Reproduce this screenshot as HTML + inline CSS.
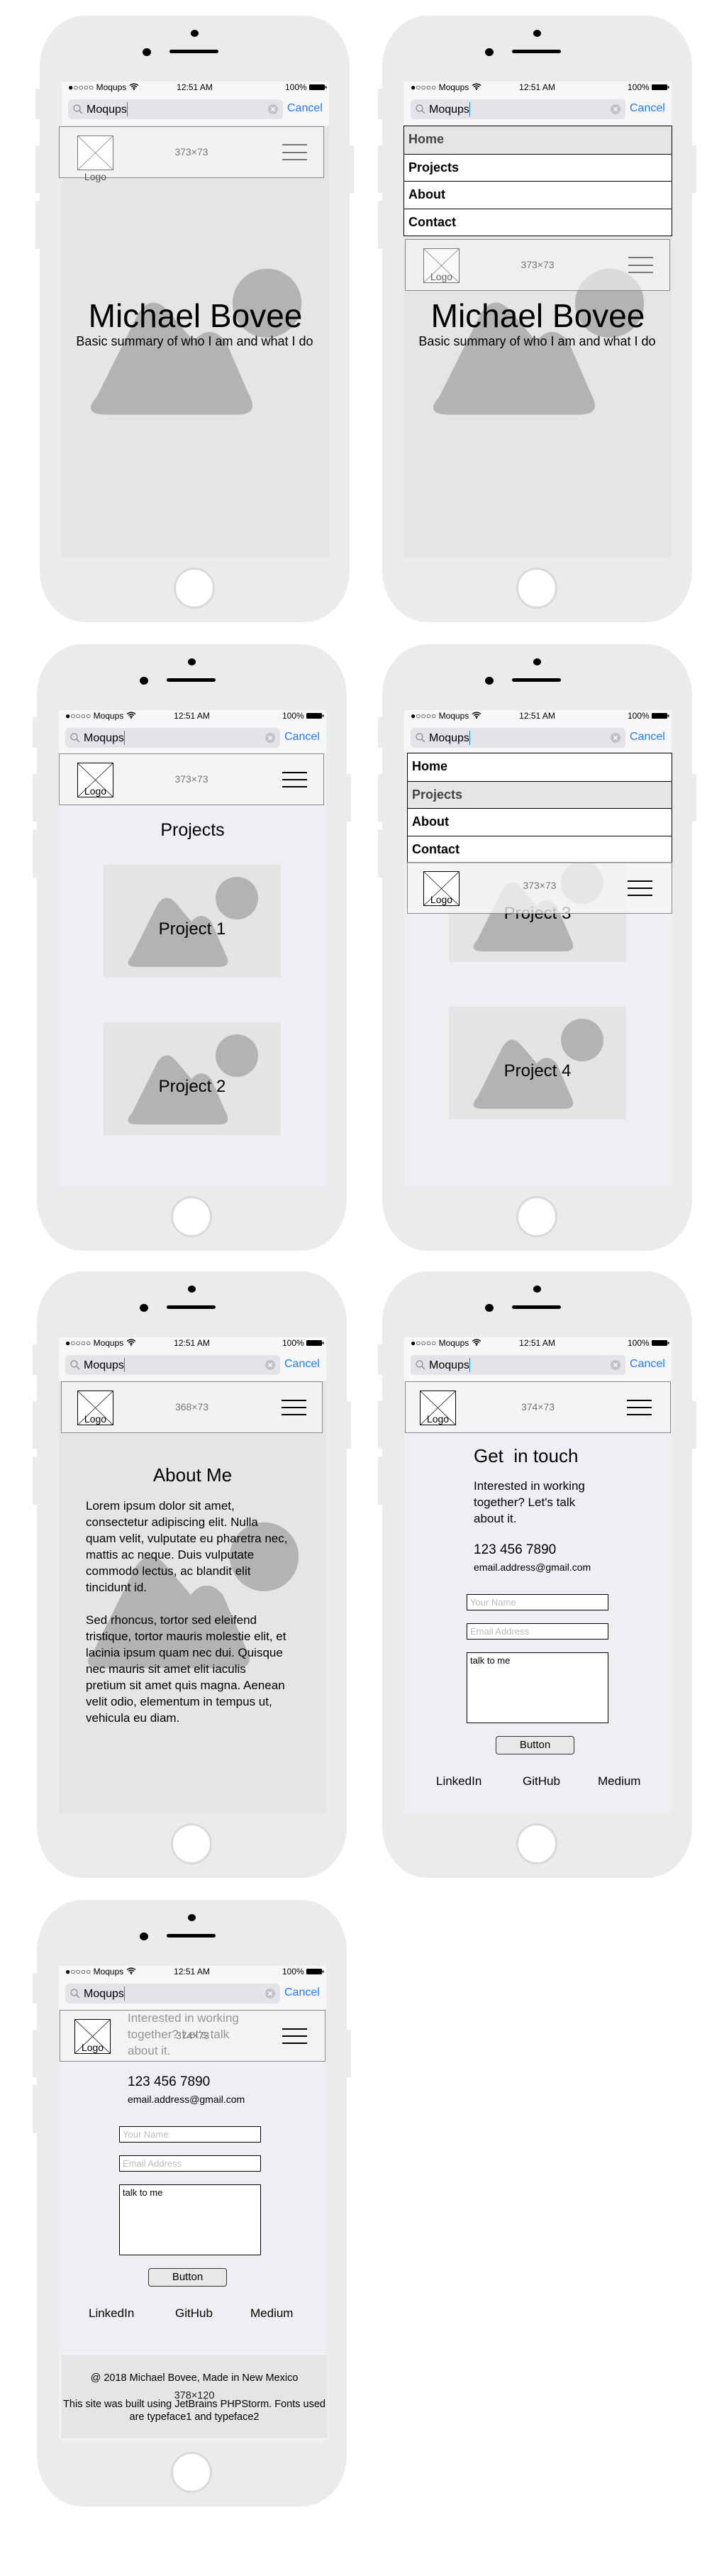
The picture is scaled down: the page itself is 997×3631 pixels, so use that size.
<!DOCTYPE html>
<html><head><meta charset="utf-8">
<style>
*{margin:0;padding:0;box-sizing:border-box}
body{width:997px;height:3631px;background:#fff;position:relative;overflow:hidden;font-family:"Liberation Sans",Arial,sans-serif;color:#000}
.ph{position:absolute;width:437px;height:855px;background:#ebebeb;border-radius:64px/72px}
.ph>*{position:absolute}
.sbtn{background:#ebebeb;width:7px}
.cam{left:213px;top:20px;width:11px;height:10px;border-radius:50%;background:#000}
.dot{left:145px;top:46px;width:12px;height:11px;border-radius:50%;background:#000}
.spk{left:183px;top:48px;width:69px;height:5px;border-radius:3px;background:#000}
.home{left:189px;top:778px;width:58px;height:58px;border-radius:50%;background:#fff;border:3px solid #d9d9d9}
.scr{left:31px;top:93px;width:377px;height:671px}
.stat{left:31px;top:93px;width:377px;height:62px;background:#f7f7f7}
.st{font-size:12px;line-height:14px;top:94px;white-space:nowrap}
.sf{left:40px;top:118px;width:303px;height:28px;border-radius:6px;background:#e3e3e8}
.stxt{left:66px;top:124px;font-size:16px;line-height:18px}
.cur{left:123px;top:122px;width:1px;height:20px;background:#1f7cf5}
.cancel{left:349px;top:122px;font-size:16px;line-height:18px;color:#1f7cf5}
.nav{height:73px;border:1px solid #888;background:rgba(245,245,246,0.82)}
.nav>*{position:absolute}
.logo{left:25px;top:12px;width:51px;height:49px;border:1px solid #000;background:#fff}
.logo svg{position:absolute;left:0;top:0}
.ll{position:absolute;left:0;width:100%;text-align:center;bottom:0;font-size:14px;line-height:16px}
.sz{left:0;width:100%;top:27px;text-align:center;font-size:14px;color:#777}
.hb{left:314px;width:35px;height:2px;background:#000}
.menu{width:375px;border:1px solid #000;background:#fff}
.menu div{height:38.5px;border-top:1px solid #000;font-weight:bold;font-size:18px;line-height:37px;padding-left:6px}
.menu div:first-child{border-top:none}
.menu .sel{background:#e5e5e5;color:#444}
.box{width:250px;height:159px;background:#e4e4e4}
.box svg{position:absolute;left:0;top:0}
.box span{position:absolute;left:0;width:100%;text-align:center;top:79px;font-size:24px;line-height:24px}
.inp{border:1px solid #000;background:#fff;font-size:13px;color:#bbb;padding-left:4px;line-height:21px}
.btn{border:1px solid #333;border-radius:4px;background:#e8e8e8;text-align:center;font-size:15px;line-height:24px}
.lk{font-size:17px;line-height:18px}
</style></head><body>

<svg width="0" height="0" style="position:absolute">
<defs>
<g id="img">
<ellipse cx="188" cy="47" rx="30" ry="30" fill="#b3b3b3"/>
<path d="M48 144 Q26 144 40 128 L76 56 Q88 38 102 54 L124 80 Q138 64 152 80 L172 126 Q182 144 162 144 Z" fill="#b3b3b3"/>
</g>
</defs>
</svg>

<!-- PHONE 1 -->
<div class="ph" style="left:56px;top:22px">
<div class="sbtn" style="left:-6px;top:103px;height:43px"></div>
<div class="sbtn" style="left:-6px;top:183px;height:67px"></div>
<div class="sbtn" style="left:-6px;top:261px;height:68px"></div>
<div class="sbtn" style="left:436px;top:183px;height:67px"></div>
<div class="cam"></div><div class="dot"></div><div class="spk"></div>
<div class="scr" style="background:#e5e5e5"></div>
<svg style="left:16px;top:329px" width="405" height="258" viewBox="0 0 250 159"><use href="#img"/></svg>
<div class="stat"></div>
<div class="st" style="left:40px">●○○○○ Moqups <svg width="14" height="10" viewBox="0 0 14 10"><path d="M1 3.5Q7 -1 13 3.5M3 5.5Q7 2.5 11 5.5M5 7.5Q7 6 9 7.5" stroke="#000" stroke-width="1.4" fill="none"/><circle cx="7" cy="9" r="1" fill="#000"/></svg></div>
<div class="st" style="left:0;width:437px;text-align:center">12:51 AM</div>
<div class="st" style="left:346px">100% <svg width="25" height="8" viewBox="0 0 25 8"><rect x="0" y="0" width="22" height="8" rx="1.5" fill="#000"/><rect x="22.5" y="2.5" width="2" height="3" fill="#000"/></svg></div>
<div class="sf"></div>
<svg style="left:47px;top:125px" width="14" height="14" viewBox="0 0 14 14"><circle cx="5.5" cy="5.5" r="4.5" stroke="#888" stroke-width="1.2" fill="none"/><path d="M9 9L13 13" stroke="#888" stroke-width="1.3"/></svg>
<div class="stxt">Moqups</div><div class="cur"></div>
<svg style="left:322px;top:125px" width="14" height="14" viewBox="0 0 14 14"><circle cx="7" cy="7" r="7" fill="#c2c2c6"/><path d="M4.5 4.5L9.5 9.5M9.5 4.5L4.5 9.5" stroke="#fff" stroke-width="1.5"/></svg>
<div class="cancel">Cancel</div>
<div class="nav" style="left:27px;top:156px;width:374px;background:#f2f2f2">
<div class="logo" style="border-color:#777"><svg width="49" height="47"><path d="M0 0L49 47M49 0L0 47" stroke="#777" stroke-width="0.7"/></svg></div>
<div style="left:25px;top:62px;width:51px;text-align:center;font-size:14px;color:#555">Logo</div>
<div class="sz">373×73</div>
<div class="hb" style="top:24px;background:#777;height:1.5px"></div><div class="hb" style="top:35px;background:#777;height:1.5px"></div><div class="hb" style="top:45px;background:#777;height:1.5px"></div>
</div>
<div style="left:31px;top:400px;width:377px;text-align:center;font-size:46px;line-height:46px">Michael Bovee</div>
<div style="left:20px;top:450px;width:397px;text-align:center;font-size:18px;line-height:18px;white-space:nowrap">Basic summary of who I am and what I do</div>
<div class="home"></div>
</div>

<!-- PHONE 2 -->
<div class="ph" style="left:539px;top:22px">
<div class="sbtn" style="left:-6px;top:103px;height:43px"></div>
<div class="sbtn" style="left:-6px;top:183px;height:67px"></div>
<div class="sbtn" style="left:-6px;top:261px;height:68px"></div>
<div class="sbtn" style="left:436px;top:183px;height:67px"></div>
<div class="cam"></div><div class="dot"></div><div class="spk"></div>
<div class="scr" style="background:#e5e5e5"></div>
<svg style="left:16px;top:329px" width="405" height="258" viewBox="0 0 250 159"><use href="#img"/></svg>
<div class="stat"></div>
<div class="st" style="left:40px">●○○○○ Moqups <svg width="14" height="10" viewBox="0 0 14 10"><path d="M1 3.5Q7 -1 13 3.5M3 5.5Q7 2.5 11 5.5M5 7.5Q7 6 9 7.5" stroke="#000" stroke-width="1.4" fill="none"/><circle cx="7" cy="9" r="1" fill="#000"/></svg></div>
<div class="st" style="left:0;width:437px;text-align:center">12:51 AM</div>
<div class="st" style="left:346px">100% <svg width="25" height="8" viewBox="0 0 25 8"><rect x="0" y="0" width="22" height="8" rx="1.5" fill="#000"/><rect x="22.5" y="2.5" width="2" height="3" fill="#000"/></svg></div>
<div class="sf"></div>
<svg style="left:47px;top:125px" width="14" height="14" viewBox="0 0 14 14"><circle cx="5.5" cy="5.5" r="4.5" stroke="#888" stroke-width="1.2" fill="none"/><path d="M9 9L13 13" stroke="#888" stroke-width="1.3"/></svg>
<div class="stxt">Moqups</div><div class="cur"></div>
<svg style="left:322px;top:125px" width="14" height="14" viewBox="0 0 14 14"><circle cx="7" cy="7" r="7" fill="#c2c2c6"/><path d="M4.5 4.5L9.5 9.5M9.5 4.5L4.5 9.5" stroke="#fff" stroke-width="1.5"/></svg>
<div class="cancel">Cancel</div>
<div style="left:31px;top:400px;width:377px;text-align:center;font-size:46px;line-height:46px">Michael Bovee</div>
<div style="left:20px;top:450px;width:397px;text-align:center;font-size:18px;line-height:18px;white-space:nowrap">Basic summary of who I am and what I do</div>
<div class="menu" style="left:30px;top:155px;width:379px"><div class="sel">Home</div><div>Projects</div><div>About</div><div>Contact</div></div>
<div class="nav" style="left:32px;top:315px;width:374px;background:rgba(245,245,245,0.6)">
<div class="logo" style="border-color:#777;background:rgba(255,255,255,0.6)"><svg width="49" height="47"><path d="M0 0L49 47M49 0L0 47" stroke="#777" stroke-width="0.7"/></svg><div class="ll" style="color:#666">Logo</div></div>
<div class="sz">373×73</div>
<div class="hb" style="top:24px;background:#777;height:1.5px"></div><div class="hb" style="top:35px;background:#777;height:1.5px"></div><div class="hb" style="top:45px;background:#777;height:1.5px"></div>
</div>
<div class="home"></div>
</div>

<!-- PHONE 3 -->
<div class="ph" style="left:52px;top:908px">
<div class="sbtn" style="left:-6px;top:103px;height:43px"></div>
<div class="sbtn" style="left:-6px;top:183px;height:67px"></div>
<div class="sbtn" style="left:-6px;top:261px;height:68px"></div>
<div class="sbtn" style="left:436px;top:183px;height:67px"></div>
<div class="cam"></div><div class="dot"></div><div class="spk"></div>
<div class="scr" style="background:#efeff3"></div>
<div class="stat"></div>
<div class="st" style="left:40px">●○○○○ Moqups <svg width="14" height="10" viewBox="0 0 14 10"><path d="M1 3.5Q7 -1 13 3.5M3 5.5Q7 2.5 11 5.5M5 7.5Q7 6 9 7.5" stroke="#000" stroke-width="1.4" fill="none"/><circle cx="7" cy="9" r="1" fill="#000"/></svg></div>
<div class="st" style="left:0;width:437px;text-align:center">12:51 AM</div>
<div class="st" style="left:346px">100% <svg width="25" height="8" viewBox="0 0 25 8"><rect x="0" y="0" width="22" height="8" rx="1.5" fill="#000"/><rect x="22.5" y="2.5" width="2" height="3" fill="#000"/></svg></div>
<div class="sf"></div>
<svg style="left:47px;top:125px" width="14" height="14" viewBox="0 0 14 14"><circle cx="5.5" cy="5.5" r="4.5" stroke="#888" stroke-width="1.2" fill="none"/><path d="M9 9L13 13" stroke="#888" stroke-width="1.3"/></svg>
<div class="stxt">Moqups</div><div class="cur"></div>
<svg style="left:322px;top:125px" width="14" height="14" viewBox="0 0 14 14"><circle cx="7" cy="7" r="7" fill="#c2c2c6"/><path d="M4.5 4.5L9.5 9.5M9.5 4.5L4.5 9.5" stroke="#fff" stroke-width="1.5"/></svg>
<div class="cancel">Cancel</div>
<div class="nav" style="left:31px;top:154px;width:374px">
<div class="logo"><svg width="49" height="47"><path d="M0 0L49 47M49 0L0 47" stroke="#000" stroke-width="0.7"/></svg><div class="ll">Logo</div></div>
<div class="sz">373×73</div>
<div class="hb" style="top:25px"></div><div class="hb" style="top:35px"></div><div class="hb" style="top:45px"></div>
</div>
<div style="left:31px;top:250px;width:377px;text-align:center;font-size:25px;line-height:25px">Projects</div>
<div class="box" style="left:94px;top:311px"><svg width="250" height="159" viewBox="0 0 250 159"><use href="#img"/></svg><span>Project 1</span></div>
<div class="box" style="left:94px;top:533px"><svg width="250" height="159" viewBox="0 0 250 159"><use href="#img"/></svg><span>Project 2</span></div>
<div class="home"></div>
</div>

<!-- PHONE 4 -->
<div class="ph" style="left:539px;top:908px">
<div class="sbtn" style="left:-6px;top:103px;height:43px"></div>
<div class="sbtn" style="left:-6px;top:183px;height:67px"></div>
<div class="sbtn" style="left:-6px;top:261px;height:68px"></div>
<div class="sbtn" style="left:436px;top:183px;height:67px"></div>
<div class="cam"></div><div class="dot"></div><div class="spk"></div>
<div class="scr" style="background:#efeff3"></div>
<div class="box" style="left:94px;top:289px"><svg width="250" height="159" viewBox="0 0 250 159"><use href="#img"/></svg><span>Project 3</span></div>
<div class="box" style="left:94px;top:511px"><svg width="250" height="159" viewBox="0 0 250 159"><use href="#img"/></svg><span>Project 4</span></div>
<div class="stat"></div>
<div class="st" style="left:40px">●○○○○ Moqups <svg width="14" height="10" viewBox="0 0 14 10"><path d="M1 3.5Q7 -1 13 3.5M3 5.5Q7 2.5 11 5.5M5 7.5Q7 6 9 7.5" stroke="#000" stroke-width="1.4" fill="none"/><circle cx="7" cy="9" r="1" fill="#000"/></svg></div>
<div class="st" style="left:0;width:437px;text-align:center">12:51 AM</div>
<div class="st" style="left:346px">100% <svg width="25" height="8" viewBox="0 0 25 8"><rect x="0" y="0" width="22" height="8" rx="1.5" fill="#000"/><rect x="22.5" y="2.5" width="2" height="3" fill="#000"/></svg></div>
<div class="sf"></div>
<svg style="left:47px;top:125px" width="14" height="14" viewBox="0 0 14 14"><circle cx="5.5" cy="5.5" r="4.5" stroke="#888" stroke-width="1.2" fill="none"/><path d="M9 9L13 13" stroke="#888" stroke-width="1.3"/></svg>
<div class="stxt">Moqups</div><div class="cur"></div>
<svg style="left:322px;top:125px" width="14" height="14" viewBox="0 0 14 14"><circle cx="7" cy="7" r="7" fill="#c2c2c6"/><path d="M4.5 4.5L9.5 9.5M9.5 4.5L4.5 9.5" stroke="#fff" stroke-width="1.5"/></svg>
<div class="cancel">Cancel</div>
<div class="menu" style="left:35px;top:153px;width:374px"><div>Home</div><div class="sel">Projects</div><div>About</div><div>Contact</div></div>
<div class="nav" style="left:35px;top:307px;width:374px;background:rgba(247,247,248,0.75)">
<div class="logo" style="left:22px"><svg width="49" height="47"><path d="M0 0L49 47M49 0L0 47" stroke="#000" stroke-width="0.7"/></svg><div class="ll">Logo</div></div>
<div class="sz" style="top:24px">373×73</div>
<div class="hb" style="left:310px;top:25px"></div><div class="hb" style="left:310px;top:35px"></div><div class="hb" style="left:310px;top:45px"></div>
</div>
<div class="home"></div>
</div>

<!-- PHONE 5 -->
<div class="ph" style="left:52px;top:1792px">
<div class="sbtn" style="left:-6px;top:103px;height:43px"></div>
<div class="sbtn" style="left:-6px;top:183px;height:67px"></div>
<div class="sbtn" style="left:-6px;top:261px;height:68px"></div>
<div class="sbtn" style="left:436px;top:183px;height:67px"></div>
<div class="cam"></div><div class="dot"></div><div class="spk"></div>
<div class="scr" style="background:#e5e5e5"></div>
<svg style="left:16px;top:326px" width="405" height="258" viewBox="0 0 250 159"><use href="#img"/></svg>
<div class="stat"></div>
<div class="st" style="left:40px">●○○○○ Moqups <svg width="14" height="10" viewBox="0 0 14 10"><path d="M1 3.5Q7 -1 13 3.5M3 5.5Q7 2.5 11 5.5M5 7.5Q7 6 9 7.5" stroke="#000" stroke-width="1.4" fill="none"/><circle cx="7" cy="9" r="1" fill="#000"/></svg></div>
<div class="st" style="left:0;width:437px;text-align:center">12:51 AM</div>
<div class="st" style="left:346px">100% <svg width="25" height="8" viewBox="0 0 25 8"><rect x="0" y="0" width="22" height="8" rx="1.5" fill="#000"/><rect x="22.5" y="2.5" width="2" height="3" fill="#000"/></svg></div>
<div class="sf"></div>
<svg style="left:47px;top:125px" width="14" height="14" viewBox="0 0 14 14"><circle cx="5.5" cy="5.5" r="4.5" stroke="#888" stroke-width="1.2" fill="none"/><path d="M9 9L13 13" stroke="#888" stroke-width="1.3"/></svg>
<div class="stxt">Moqups</div><div class="cur"></div>
<svg style="left:322px;top:125px" width="14" height="14" viewBox="0 0 14 14"><circle cx="7" cy="7" r="7" fill="#c2c2c6"/><path d="M4.5 4.5L9.5 9.5M9.5 4.5L4.5 9.5" stroke="#fff" stroke-width="1.5"/></svg>
<div class="cancel">Cancel</div>
<div class="nav" style="left:34px;top:155px;width:369px;background:#f2f2f2">
<div class="logo" style="left:22px"><svg width="49" height="47"><path d="M0 0L49 47M49 0L0 47" stroke="#000" stroke-width="0.7"/></svg><div class="ll">Logo</div></div>
<div class="sz">368×73</div>
<div class="hb" style="left:310px;top:25px"></div><div class="hb" style="left:310px;top:35px"></div><div class="hb" style="left:310px;top:45px"></div>
</div>
<div style="left:31px;top:274px;width:377px;text-align:center;font-size:26px;line-height:26px">About Me</div>
<div style="left:69px;top:319px;font-size:17px;line-height:23px;white-space:nowrap">Lorem ipsum dolor sit amet,<br>consectetur adipiscing elit. Nulla<br>quam velit, vulputate eu pharetra nec,<br>mattis ac neque. Duis vulputate<br>commodo lectus, ac blandit elit<br>tincidunt id.<br><br>Sed rhoncus, tortor sed eleifend<br>tristique, tortor mauris molestie elit, et<br>lacinia ipsum quam nec dui. Quisque<br>nec mauris sit amet elit iaculis<br>pretium sit amet quis magna. Aenean<br>velit odio, elementum in tempus ut,<br>vehicula eu diam.</div>
<div class="home"></div>
</div>

<!-- PHONE 6 -->
<div class="ph" style="left:539px;top:1792px">
<div class="sbtn" style="left:-6px;top:103px;height:43px"></div>
<div class="sbtn" style="left:-6px;top:183px;height:67px"></div>
<div class="sbtn" style="left:-6px;top:261px;height:68px"></div>
<div class="sbtn" style="left:436px;top:183px;height:67px"></div>
<div class="cam"></div><div class="dot"></div><div class="spk"></div>
<div class="scr" style="background:#efeff3"></div>
<div class="stat"></div>
<div class="st" style="left:40px">●○○○○ Moqups <svg width="14" height="10" viewBox="0 0 14 10"><path d="M1 3.5Q7 -1 13 3.5M3 5.5Q7 2.5 11 5.5M5 7.5Q7 6 9 7.5" stroke="#000" stroke-width="1.4" fill="none"/><circle cx="7" cy="9" r="1" fill="#000"/></svg></div>
<div class="st" style="left:0;width:437px;text-align:center">12:51 AM</div>
<div class="st" style="left:346px">100% <svg width="25" height="8" viewBox="0 0 25 8"><rect x="0" y="0" width="22" height="8" rx="1.5" fill="#000"/><rect x="22.5" y="2.5" width="2" height="3" fill="#000"/></svg></div>
<div class="sf"></div>
<svg style="left:47px;top:125px" width="14" height="14" viewBox="0 0 14 14"><circle cx="5.5" cy="5.5" r="4.5" stroke="#888" stroke-width="1.2" fill="none"/><path d="M9 9L13 13" stroke="#888" stroke-width="1.3"/></svg>
<div class="stxt">Moqups</div><div class="cur"></div>
<svg style="left:322px;top:125px" width="14" height="14" viewBox="0 0 14 14"><circle cx="7" cy="7" r="7" fill="#c2c2c6"/><path d="M4.5 4.5L9.5 9.5M9.5 4.5L4.5 9.5" stroke="#fff" stroke-width="1.5"/></svg>
<div class="cancel">Cancel</div>
<div class="nav" style="left:32px;top:155px;width:375px">
<div class="logo" style="left:20px"><svg width="49" height="47"><path d="M0 0L49 47M49 0L0 47" stroke="#000" stroke-width="0.7"/></svg><div class="ll">Logo</div></div>
<div class="sz">374×73</div>
<div class="hb" style="left:312px;top:25px"></div><div class="hb" style="left:312px;top:35px"></div><div class="hb" style="left:312px;top:45px"></div>
</div>
<div style="left:129px;top:247px;font-size:26px;line-height:26px;white-space:pre">Get  in touch</div>
<div style="left:129px;top:291px;font-size:17px;line-height:23px;white-space:nowrap">Interested in working<br>together? Let's talk<br>about it.</div>
<div style="left:129px;top:383px;font-size:19px;line-height:19px">123 456 7890</div>
<div style="left:129px;top:410px;font-size:14px;line-height:14px">email.address@gmail.com</div>
<div class="inp" style="left:119px;top:455px;width:200px;height:23px">Your Name</div>
<div class="inp" style="left:119px;top:496px;width:200px;height:23px">Email Address</div>
<div class="inp" style="left:119px;top:537px;width:200px;height:100px;color:#000;line-height:18px;padding-top:2px">talk to me</div>
<div class="btn" style="left:160px;top:655px;width:111px;height:26px">Button</div>
<div class="lk" style="left:76px;top:710px">LinkedIn</div>
<div class="lk" style="left:198px;top:710px">GitHub</div>
<div class="lk" style="left:304px;top:710px">Medium</div>
<div class="home"></div>
</div>

<!-- PHONE 7 -->
<div class="ph" style="left:52px;top:2678px">
<div class="sbtn" style="left:-6px;top:103px;height:43px"></div>
<div class="sbtn" style="left:-6px;top:183px;height:67px"></div>
<div class="sbtn" style="left:-6px;top:261px;height:68px"></div>
<div class="sbtn" style="left:436px;top:183px;height:67px"></div>
<div class="cam"></div><div class="dot"></div><div class="spk"></div>
<div class="scr" style="background:#efeff3"></div>
<div style="left:128px;top:155px;font-size:17px;line-height:23px;white-space:nowrap">Interested in working<br>together? Let's talk<br>about it.</div>
<div class="stat"></div>
<div class="st" style="left:40px">●○○○○ Moqups <svg width="14" height="10" viewBox="0 0 14 10"><path d="M1 3.5Q7 -1 13 3.5M3 5.5Q7 2.5 11 5.5M5 7.5Q7 6 9 7.5" stroke="#000" stroke-width="1.4" fill="none"/><circle cx="7" cy="9" r="1" fill="#000"/></svg></div>
<div class="st" style="left:0;width:437px;text-align:center">12:51 AM</div>
<div class="st" style="left:346px">100% <svg width="25" height="8" viewBox="0 0 25 8"><rect x="0" y="0" width="22" height="8" rx="1.5" fill="#000"/><rect x="22.5" y="2.5" width="2" height="3" fill="#000"/></svg></div>
<div class="sf"></div>
<svg style="left:47px;top:125px" width="14" height="14" viewBox="0 0 14 14"><circle cx="5.5" cy="5.5" r="4.5" stroke="#888" stroke-width="1.2" fill="none"/><path d="M9 9L13 13" stroke="#888" stroke-width="1.3"/></svg>
<div class="stxt">Moqups</div><div class="cur"></div>
<svg style="left:322px;top:125px" width="14" height="14" viewBox="0 0 14 14"><circle cx="7" cy="7" r="7" fill="#c2c2c6"/><path d="M4.5 4.5L9.5 9.5M9.5 4.5L4.5 9.5" stroke="#fff" stroke-width="1.5"/></svg>
<div class="cancel">Cancel</div>
<div class="nav" style="left:32px;top:155px;width:375px;background:rgba(245,245,246,0.6)">
<div class="logo" style="left:20px"><svg width="49" height="47"><path d="M0 0L49 47M49 0L0 47" stroke="#000" stroke-width="0.7"/></svg><div class="ll">Logo</div></div>
<div class="sz">374×73</div>
<div class="hb" style="left:313px;top:25px"></div><div class="hb" style="left:313px;top:35px"></div><div class="hb" style="left:313px;top:45px"></div>
</div>
<div style="left:128px;top:247px;font-size:19px;line-height:19px">123 456 7890</div>
<div style="left:128px;top:274px;font-size:14px;line-height:14px">email.address@gmail.com</div>
<div class="inp" style="left:116px;top:319px;width:200px;height:23px">Your Name</div>
<div class="inp" style="left:116px;top:360px;width:200px;height:23px">Email Address</div>
<div class="inp" style="left:116px;top:401px;width:200px;height:100px;color:#000;line-height:18px;padding-top:2px">talk to me</div>
<div class="btn" style="left:157px;top:519px;width:111px;height:26px">Button</div>
<div class="lk" style="left:73px;top:574px">LinkedIn</div>
<div class="lk" style="left:195px;top:574px">GitHub</div>
<div class="lk" style="left:301px;top:574px">Medium</div>
<div style="left:33px;top:640px;width:378px;height:120px;background:#e5e5e5;border:1px solid #f7f7f7"></div>
<div style="left:23px;top:667px;width:398px;text-align:center;font-size:14.5px;line-height:15px;white-space:nowrap">@ 2018 Michael Bovee, Made in New Mexico</div>
<div style="left:33px;top:692px;width:378px;text-align:center;font-size:14.5px;line-height:15px;color:#222">378×120</div>
<div style="left:23px;top:702px;width:398px;text-align:center;font-size:14.5px;line-height:18px;white-space:nowrap">This site was built using JetBrains PHPStorm. Fonts used<br>are typeface1 and typeface2</div>
<div class="home"></div>
</div>

</body></html>
